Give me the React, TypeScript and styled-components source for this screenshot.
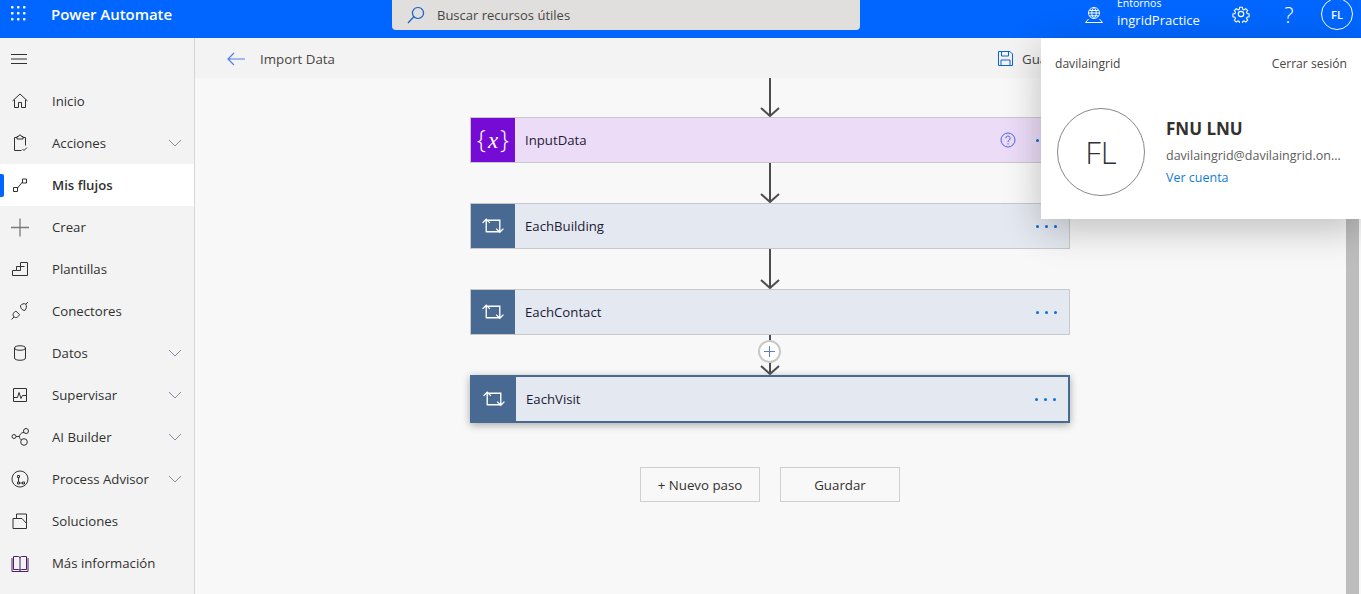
import React from "react";
import styled, { createGlobalStyle } from "styled-components";

const GlobalStyle = createGlobalStyle`
  html, body {
    margin: 0;
    height: 100%;
    overflow: hidden;
    background: #f8f8f8;
    font-family: "Open Sans", "Noto Sans", sans-serif;
    color: #323130;
  }
  * { box-sizing: border-box; }
`;

const Page = styled.div`
  position: relative;
  width: 1361px;
  height: 594px;
  display: flex;
  flex-direction: column;
  overflow: hidden;
`;

// top blue bar
const TopBar = styled.header`
  height: 38px;
  flex: none;
  background: #0066ff;
  display: flex;
  align-items: center;
  color: #fff;
`;
const Waffle = styled.div`
  width: 51px;
  padding-left: 10px;
  display: flex;
  margin-bottom: 12px;
`;
const Brand = styled.div`
  width: 341px;
  font-size: 15px;
  font-weight: 600;
  margin-bottom: 10px;
  letter-spacing: -0.05px;
`;
const SearchBox = styled.div`
  width: 468px;
  height: 30px;
  align-self: flex-start;
  background: #e1dfdd;
  border-radius: 0 0 4px 4px;
  display: flex;
  align-items: center;
  padding-left: 15px;
  gap: 12px;
  font-size: 13px;
  color: #484644;
`;
const TopRight = styled.div`
  margin-left: auto;
  display: flex;
  align-items: center;
  height: 100%;
`;
const EnvIcon = styled.div`
  display: flex;
  width: 32px;
  margin-bottom: 8px;
`;
const EnvText = styled.div`
  width: 100px;
  height: 38px;
  overflow: hidden;
  display: flex;
  flex-direction: column;
  justify-content: flex-end;
  padding-bottom: 9px;
`;
const EnvLabel = styled.div`
  font-size: 10.5px;
  line-height: 13px;
  margin-bottom: 2px;
`;
const EnvName = styled.div`
  font-size: 13px;
  line-height: 17px;
`;
const TopIcon = styled.div`
  width: 48px;
  display: flex;
  justify-content: center;
  margin-bottom: 10px;
`;
const HelpGlyph = styled.span`
  font-size: 22px;
  font-weight: 300;
  line-height: 1;
`;
const MeButton = styled.div`
  width: 32px;
  height: 32px;
  border: 1px solid #fff;
  border-radius: 50%;
  margin: 0 8px 10px 8px;
  display: flex;
  align-items: center;
  justify-content: center;
  font-size: 11px;
  font-weight: 600;
`;

const Body = styled.div`
  flex: 1;
  display: flex;
  min-height: 0;
`;

// left nav
const SideNav = styled.nav`
  width: 195px;
  flex: none;
  background: #f3f3f3;
  border-right: 1px solid #d6d6d6;
  display: flex;
  flex-direction: column;
`;
const NavToggle = styled.div`
  height: 42px;
  display: flex;
  align-items: center;
  padding-left: 11px;
`;
const NavItem = styled.div<{ $active?: boolean }>`
  position: relative;
  height: 42px;
  flex: none;
  display: flex;
  align-items: center;
  background: ${(p) => (p.$active ? "#fff" : "transparent")};
  font-size: 13.2px;
  font-weight: ${(p) => (p.$active ? 600 : 400)};
  color: #323130;
`;
const ActiveMark = styled.span`
  position: absolute;
  left: 0;
  top: 10px;
  width: 4px;
  height: 23px;
  background: #0066ff;
  border-radius: 0 2px 2px 0;
`;
const NavIcon = styled.span`
  width: 52px;
  padding-left: 10px;
  display: flex;
  flex: none;
`;
const NavLabel = styled.span`
  flex: 1;
`;
const NavChevron = styled.span`
  width: 26px;
  display: flex;
`;

// main area
const Main = styled.main`
  flex: 1;
  display: flex;
  flex-direction: column;
  min-width: 0;
`;
const CommandBar = styled.div`
  height: 40px;
  flex: none;
  background: #f3f3f3;
  display: flex;
  align-items: center;
  padding: 1px 0 0 32px;
  font-size: 13.3px;
  color: #484644;
`;
const BackIcon = styled.span`
  display: flex;
  width: 33px;
`;
const SaveCommand = styled.div`
  margin-left: auto;
  display: flex;
  align-items: center;
  gap: 9px;
  width: 363px;
`;
const CanvasRow = styled.div`
  flex: 1;
  display: flex;
  min-height: 0;
`;
const Canvas = styled.div`
  flex: 1;
  display: flex;
  flex-direction: column;
  align-items: center;
  padding-right: 1px;
`;
const ScrollThumb = styled.div`
  width: 13px;
  margin-right: 2px;
  flex: none;
  background: #bdbdbd;
`;

const Connector = styled.div<{ $height: number }>`
  position: relative;
  width: 24px;
  height: ${(p) => p.$height}px;
  flex: none;
  display: flex;
  justify-content: center;
`;
const AddStep = styled.div`
  position: absolute;
  left: 0;
  top: 5px;
  width: 23px;
  height: 23px;
  border-radius: 50%;
  background: #fff;
  border: 2px solid #c8c8c8;
  display: flex;
  align-items: center;
  justify-content: center;
`;

const Card = styled.div<{ $selected?: boolean; $tint: string; $accent: string }>`
  width: 600px;
  height: ${(p) => (p.$selected ? 48 : 46)}px;
  flex: none;
  display: flex;
  align-items: stretch;
  background: ${(p) => p.$tint};
  border: ${(p) => (p.$selected ? `2px solid ${p.$accent}` : "1px solid #c8c8c8")};
  box-shadow: ${(p) => (p.$selected ? "0 2px 8px rgba(0,0,0,0.32)" : "none")};
`;
const CardIcon = styled.div<{ $accent: string }>`
  width: 44px;
  flex: none;
  background: ${(p) => p.$accent};
  display: flex;
  align-items: center;
  justify-content: center;
`;
const VariableGlyph = styled.span`
  font-family: "Open Sans", sans-serif;
  font-size: 25px;
  font-weight: 300;
  line-height: 1;
  color: #fff;
  white-space: nowrap;
  margin-top: -3px;
  em {
    font-family: "Liberation Serif", serif;
    font-size: 23px;
    margin: 0 2px;
  }
`;
const CardTitle = styled.div`
  flex: 1;
  display: flex;
  align-items: center;
  padding-left: 10px;
  font-size: 13.2px;
  color: #1d1b36;
`;
const CardHelp = styled.span`
  display: flex;
  margin-right: 20px;
  align-items: center;
`;
const Dots = styled.div`
  display: flex;
  align-items: center;
  gap: 6px;
  width: 33px;
  flex: none;
`;
const Dot = styled.i`
  width: 3px;
  height: 3px;
  border-radius: 50%;
  background: #0a6fdc;
`;

const ButtonRow = styled.div`
  display: flex;
  gap: 20px;
  margin-top: 44px;
`;
const FlowButton = styled.button`
  width: 120px;
  height: 35px;
  background: transparent;
  border: 1px solid #cfcfcf;
  font: inherit;
  font-size: 13.3px;
  color: #323130;
  padding: 0;
`;

// account popup
const AccountPanel = styled.aside`
  position: absolute;
  right: 0;
  top: 38px;
  width: 320px;
  height: 181px;
  background: #fff;
  box-shadow: 0 10px 36px rgba(0, 0, 0, 0.24);
  padding: 18px 14px 0 14px;
`;
const PanelTop = styled.div`
  display: flex;
  justify-content: space-between;
  font-size: 12.1px;
  line-height: 16px;
  color: #484644;
`;
const PanelBody = styled.div`
  display: flex;
  align-items: center;
  margin-top: 36px;
  margin-left: 2px;
  gap: 21px;
`;
const BigAvatar = styled.div`
  width: 88px;
  height: 88px;
  flex: none;
  border: 1px solid #8a8886;
  border-radius: 50%;
  display: flex;
  align-items: center;
  justify-content: center;
  font-size: 31px;
  font-weight: 300;
  color: #323130;
`;
const PanelInfo = styled.div`
  min-width: 0;
  flex: 1;
`;
const PanelName = styled.div`
  font-size: 17px;
  line-height: 22px;
  font-weight: 700;
  color: #323130;
`;
const PanelMail = styled.div`
  font-size: 12.5px;
  line-height: 18px;
  margin-top: 7px;
  color: #605e5c;
  white-space: nowrap;
  overflow: hidden;
  text-overflow: ellipsis;
`;
const PanelLink = styled.div`
  font-size: 12.5px;
  line-height: 18px;
  margin-top: 4px;
  color: #0f7ddb;
`;

const ink = { fill: "none", stroke: "#323130", strokeWidth: 1 };

const icons: Record<string, React.ReactNode> = {
  home: <path {...ink} d="M2.500 10 10 3l7.500 7M4.500 8.500V16.500h4v-5h3v5h4V8.500" />,
  clipboard: <path {...ink} d="M7 4.500H4.500v13h7M13 4.500h2.500v8M7 3.500h1.500a1.500 1.500 0 0 1 3 0H13v2.500H7zM12.500 16l1.500 1.500 3-3" />,
  flow: <path {...ink} d="M3.500 12.500h4v4h-4zM12.500 4h4v4h-4zM7.500 13 12.500 7" />,
  plus: <path fill="none" stroke="#7a7a7a" strokeWidth="1.300" d="M10 1.500v18M1 10.500h18" />,
  templates: <path {...ink} d="M2.500 16.500v-5h4v-4h4v-4h7v13zM6.500 11.500h4v-4h4" />,
  connectors: <path {...ink} d="M1.500 18.500 4 16M3.800 15.800C6 17.500 8.500 16 9.500 13.500L6 10.200C3.500 11 2.200 13.500 3.800 15.800zM10.500 4.500C10.300 7 12 9.300 14.800 9.500 16.500 7.500 17 5 15.800 3.200 14 2 12 3 10.500 4.500zM15.800 3.200 18 1" />,
  data: <path {...ink} d="M4.500 5c0-3 11-3 11 0v10c0 3-11 3-11 0zM4.500 5c0 3 11 3 11 0" />,
  monitor: <path {...ink} d="M3.500 3.500h13v13h-13zM3.500 12.500h4l1.500-5 2 6 1.500-3h4" />,
  ai: (
    <g {...ink}>
      <circle cx="4" cy="9.500" r="2" />
      <circle cx="16" cy="4" r="2.500" />
      <circle cx="14" cy="15" r="3.300" />
      <path d="M14 5.500C11 5.500 9 8 9.500 10.500 10 12 10.500 12.500 11.500 13M6 9.500h3.300" />
    </g>
  ),
  process: <path {...ink} d="M10 2a8 8 0 1 1-.01 0M7.500 6.500h2v2h-2zM8.500 8.500v4.500M7.500 13h2v2h-2zM9.500 14h3M12.500 13h2v2h-2z" />,
  solutions: <path {...ink} d="M3 7.500h9l4.500 5v5H3zM6.500 7.500V3h10v9.500" />,
  book: <path fill="none" stroke="#4b1f63" strokeWidth="1" d="M3.500 3.500h5q1.500 0 1.500 2 0-2 1.500-2h5v13h-5q-1.500 0-1.500 1 0-1-1.500-1h-5zM10 5.500v12M2 5v13.500h16V5" />,
};

function NavGlyph({ name }: { name: string }) {
  return (
    <svg width="20" height="20" viewBox="0 0 20 20">
      {icons[name]}
    </svg>
  );
}

function Chevron() {
  return (
    <svg width="14" height="8" viewBox="0 0 14 8">
      <path d="M1 1l6 6 6-6" fill="none" stroke="#7d8ea3" strokeWidth="1" />
    </svg>
  );
}

function Arrow({ height }: { height: number }) {
  const h = height;
  return (
    <svg width="24" height={h} viewBox={`0 0 24 ${h}`}>
      <path d={`M12 0V${h - 1}`} stroke="#4d4d4d" strokeWidth="2" />
      <path d={`M3 ${h - 9}l9 8 9-8`} fill="none" stroke="#4d4d4d" strokeWidth="2" />
    </svg>
  );
}

function LoopIcon() {
  return (
    <svg width="24" height="18" viewBox="0 0 23 17">
      <path
        d="M5 14.500V2M1.500 5.500 5 2l3.500 3.500M5 3h13v11.500M5 14h13M14.500 11 18 14.500 21.500 11"
        fill="none"
        stroke="#fff"
        strokeWidth="1.300"
      />
    </svg>
  );
}

const navItems = [
  { name: "home", label: "Inicio" },
  { name: "clipboard", label: "Acciones", chevron: true },
  { name: "flow", label: "Mis flujos", active: true },
  { name: "plus", label: "Crear" },
  { name: "templates", label: "Plantillas" },
  { name: "connectors", label: "Conectores" },
  { name: "data", label: "Datos", chevron: true },
  { name: "monitor", label: "Supervisar", chevron: true },
  { name: "ai", label: "AI Builder", chevron: true },
  { name: "process", label: "Process Advisor", chevron: true },
  { name: "solutions", label: "Soluciones" },
  { name: "book", label: "Más información" },
];

const BLUE = "#486991";
const BLUE_TINT = "#e4e8f0";

function CardDots() {
  return (
    <Dots>
      <Dot />
      <Dot />
      <Dot />
    </Dots>
  );
}

export default function App() {
  return (
    <Page>
      <GlobalStyle />
      <TopBar>
        <Waffle>
          <svg width="16" height="16" viewBox="0 0 16 16" fill="#fff">
            {[1, 7, 13].map((y) =>
              [1, 7, 13].map((x) => <rect key={`${x}-${y}`} x={x} y={y} width="2.500" height="2.500" rx="0.800" />)
            )}
          </svg>
        </Waffle>
        <Brand>Power Automate</Brand>
        <SearchBox>
          <svg width="18" height="18" viewBox="0 0 18 18">
            <path d="M1 17 7 10.500M11 1.500a5.500 5.500 0 1 1-.01 0" fill="none" stroke="#1761c9" strokeWidth="1.200" />
          </svg>
          Buscar recursos útiles
        </SearchBox>
        <TopRight>
          <EnvIcon>
            <svg width="18" height="18" viewBox="0 0 18 18">
              <path
                d="M9 1.500a5.500 5.500 0 1 1-.01 0M9 1.500c-3 3-3 8 0 11M9 1.500c3 3 3 8 0 11M3.800 7h10.400M4.500 4.500h9M4.500 9.800h9M3.500 13 .5 16.500h17L14.500 13"
                fill="none"
                stroke="#fff"
                strokeWidth="1"
              />
            </svg>
          </EnvIcon>
          <EnvText>
            <EnvLabel>Entornos</EnvLabel>
            <EnvName>ingridPractice</EnvName>
          </EnvText>
          <TopIcon>
            <svg width="18" height="18" viewBox="0 0 24 24" fill="none" stroke="#fff" strokeWidth="1.600">
              <path d="M10 2h4l.6 3 1.900.8 2.600-1.700 2.800 2.800-1.700 2.600.8 1.900 3 .6v4l-3 .6-.8 1.900 1.700 2.600-2.800 2.800-2.600-1.700-1.900.8-.6 3h-4l-.6-3-1.900-.8-2.600 1.700-2.800-2.800 1.700-2.600-.8-1.900-3-.6v-4l3-.6.8-1.900-1.700-2.600 2.800-2.800 2.600 1.700 1.900-.8z" transform="translate(1.200 1.200) scale(.9)" />
              <circle cx="12" cy="12" r="3.600" />
            </svg>
          </TopIcon>
          <TopIcon>
            <HelpGlyph>?</HelpGlyph>
          </TopIcon>
          <MeButton>FL</MeButton>
        </TopRight>
      </TopBar>
      <Body>
        <SideNav>
          <NavToggle>
            <svg width="16" height="10" viewBox="0 0 16 10">
              <path d="M0 .5h16M0 5h16M0 9.500h16" stroke="#323130" strokeWidth="1" />
            </svg>
          </NavToggle>
          {navItems.map((item) => (
            <NavItem key={item.label} $active={item.active}>
              {item.active && <ActiveMark />}
              <NavIcon>
                <NavGlyph name={item.name} />
              </NavIcon>
              <NavLabel>{item.label}</NavLabel>
              {item.chevron && (
                <NavChevron>
                  <Chevron />
                </NavChevron>
              )}
            </NavItem>
          ))}
        </SideNav>
        <Main>
          <CommandBar>
            <BackIcon>
              <svg width="18" height="14" viewBox="0 0 18 14">
                <path d="M18 7H1M7 1 1 7l6 6" fill="none" stroke="#4f7df0" strokeWidth="1.200" />
              </svg>
            </BackIcon>
            Import Data
            <SaveCommand>
              <svg width="15" height="15" viewBox="0 0 15 15">
                <path d="M.5.500h11.500l2.500 2.500v11.500H.5zM3.500.500v4.500h7V.500M3 14.500V9h9v5.500" fill="none" stroke="#0a63d8" strokeWidth="1" />
              </svg>
              Guardar
            </SaveCommand>
          </CommandBar>
          <CanvasRow>
            <Canvas>
              <Connector $height={39}>
                <Arrow height={39} />
              </Connector>
              <Card $tint="#ecdcf8" $accent="#770bd6">
                <CardIcon $accent="#770bd6">
                  <VariableGlyph>
                    {"{"}
                    <em>x</em>
                    {"}"}
                  </VariableGlyph>
                </CardIcon>
                <CardTitle>InputData</CardTitle>
                <CardHelp>
                  <svg width="16" height="16" viewBox="0 0 16 16" fill="none" stroke="#4a62f0" strokeWidth="1">
                    <circle cx="8" cy="8" r="7" />
                    <path d="M5.800 6.200a2.200 2.200 0 1 1 3.300 1.900c-.8.500-1.100.9-1.100 1.900M8 11.200v1.300" />
                  </svg>
                </CardHelp>
                <CardDots />
              </Card>
              <Connector $height={40}>
                <Arrow height={40} />
              </Connector>
              <Card $tint={BLUE_TINT} $accent={BLUE}>
                <CardIcon $accent={BLUE}>
                  <LoopIcon />
                </CardIcon>
                <CardTitle>EachBuilding</CardTitle>
                <CardDots />
              </Card>
              <Connector $height={40}>
                <Arrow height={40} />
              </Connector>
              <Card $tint={BLUE_TINT} $accent={BLUE}>
                <CardIcon $accent={BLUE}>
                  <LoopIcon />
                </CardIcon>
                <CardTitle>EachContact</CardTitle>
                <CardDots />
              </Card>
              <Connector $height={40}>
                <Arrow height={40} />
                <AddStep>
                  <svg width="11" height="11" viewBox="0 0 11 11">
                    <path d="M5.500 0v11M0 5.500h11" stroke="#5b7fc0" strokeWidth="1" />
                  </svg>
                </AddStep>
              </Connector>
              <Card $selected $tint={BLUE_TINT} $accent={BLUE}>
                <CardIcon $accent={BLUE}>
                  <LoopIcon />
                </CardIcon>
                <CardTitle>EachVisit</CardTitle>
                <CardDots />
              </Card>
              <ButtonRow>
                <FlowButton>+ Nuevo paso</FlowButton>
                <FlowButton>Guardar</FlowButton>
              </ButtonRow>
            </Canvas>
            <ScrollThumb />
          </CanvasRow>
        </Main>
      </Body>
      <AccountPanel>
        <PanelTop>
          <span>davilaingrid</span>
          <span>Cerrar sesión</span>
        </PanelTop>
        <PanelBody>
          <BigAvatar>FL</BigAvatar>
          <PanelInfo>
            <PanelName>FNU LNU</PanelName>
            <PanelMail>davilaingrid@davilaingrid.onmicrosoft.com</PanelMail>
            <PanelLink>Ver cuenta</PanelLink>
          </PanelInfo>
        </PanelBody>
      </AccountPanel>
    </Page>
  );
}
